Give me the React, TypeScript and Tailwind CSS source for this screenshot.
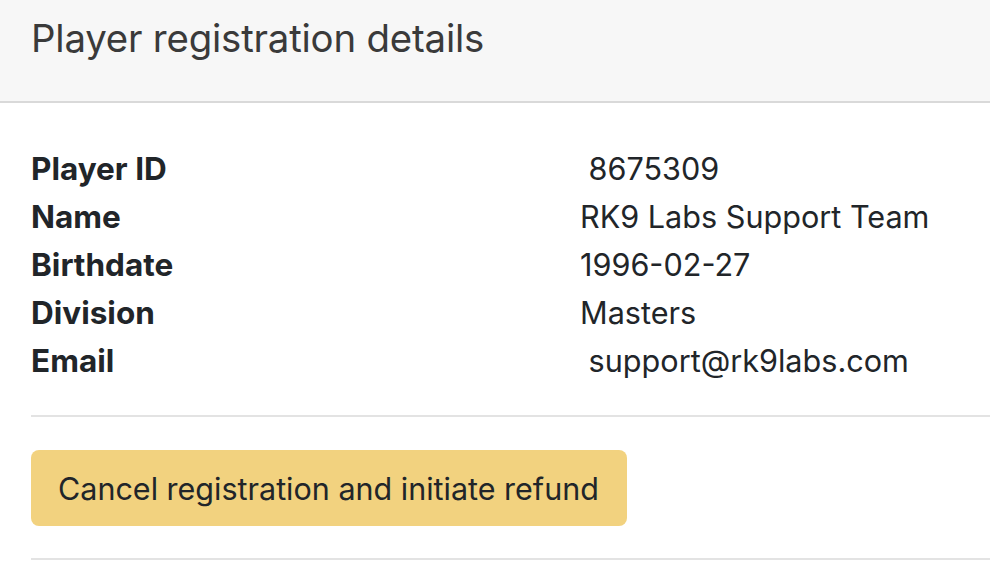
const rows: { label: string; value: string }[] = [
  { label: 'Player ID', value: '\u00a08675309' },
  { label: 'Name', value: 'RK9 Labs Support Team' },
  { label: 'Birthdate', value: '1996-02-27' },
  { label: 'Division', value: 'Masters' },
  { label: 'Email', value: '\u00a0support@rk9labs.com' },
]

export default function App() {
  return (
    <div className="w-[990px] h-[570px] overflow-hidden bg-white font-['Inter',sans-serif] text-[#212529]">
      {/* Card header */}
      <div className="h-[103px] bg-[#f7f7f7] border-b-2 border-[#d9d9d9] px-[31px] pt-[14px]">
        <h5 className="text-[38.4px] leading-[48px] text-[#3a3a3a] tracking-[-0.2px]">Player registration details</h5>
      </div>

      {/* Card body */}
      <div className="pl-[31px] pt-[42px]">
        <div className="flex flex-col">
          {rows.map((r) => (
            <div key={r.label} className="flex h-[48px] items-center">
              <div className="w-[549px] font-bold text-[31.5px]">{r.label}</div>
              <div className="whitespace-pre text-[30.6px]">{r.value}</div>
            </div>
          ))}
        </div>

        <hr className="mt-[30px] border-0 border-t-2 border-[#e3e3e3]" />

        <button className="mt-[33px] h-[76px] pl-[27px] pr-[28px] pt-[2px] rounded-[8px] bg-[#f2d27f] text-[30.5px] text-[#212529]">
          Cancel registration and initiate refund
        </button>

        <hr className="mt-[32px] border-0 border-t-2 border-[#e3e3e3]" />
      </div>
    </div>
  )
}
